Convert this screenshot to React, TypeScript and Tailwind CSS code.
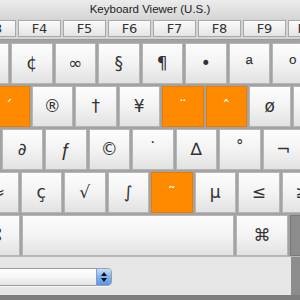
import React from "react";

type KeyProps = { label?: string; kind?: "plain" | "orange" | "dark"; w?: string; alt?: boolean };

const Key = ({ label = "", kind = "plain", w = "w-[41.5px]", alt = false }: KeyProps) => {
  const look =
    kind === "orange"
      ? "bg-[#ff8a00] border-[#e67c00] text-white text-[16px]"
      : kind === "dark"
      ? "bg-[#8c8c8c] border-[#7a7a7a] text-[#333]"
      : "bg-linear-to-b from-[#fdfdfd] via-[#f3f3f3] to-[#e2e2e2] border-[#b6b6b6] text-[#333] text-[17px]";
  return (
    <div
      className={`${w} ${look} shrink-0 h-full border flex items-center justify-center leading-none ${alt ? "text-[19px]" : ""}`}
      style={{
        fontFamily: alt
          ? '"Liberation Sans", "DejaVu Sans", sans-serif'
          : '"DejaVu Sans", "Liberation Sans", sans-serif',
      }}
    >
      {label}
    </div>
  );
};

const rows: { offset: string; keys: KeyProps[] }[] = [
  {
    offset: "ml-[-32.5px]",
    keys: [
      { label: "£" },
      { label: "¢" },
      { label: "∞" },
      { label: "§" },
      { label: "¶" },
      { label: "•" },
      { label: "ª", alt: true },
      { label: "º", alt: true },
    ],
  },
  {
    offset: "ml-[-12px]",
    keys: [
      { label: "´", kind: "orange" },
      { label: "®" },
      { label: "†" },
      { label: "¥" },
      { label: "¨", kind: "orange" },
      { label: "ˆ", kind: "orange" },
      { label: "ø" },
      { label: "π" },
    ],
  },
  {
    offset: "ml-[-42px]",
    keys: [
      { label: "å" },
      { label: "∂" },
      { label: "ƒ", alt: true },
      { label: "©" },
      { label: "˙" },
      { label: "∆" },
      { label: "˚" },
      { label: "¬" },
    ],
  },
  {
    offset: "ml-[-23px]",
    keys: [
      { label: "≈" },
      { label: "ç" },
      { label: "√" },
      { label: "∫" },
      { label: "˜", kind: "orange" },
      { label: "µ" },
      { label: "≤" },
      { label: "≥" },
    ],
  },
];

const fkeys = ["F3", "F4", "F5", "F6", "F7", "F8", "F9", "F10"];

export default function App() {
  return (
    <div
      className="w-[300px] h-[300px] overflow-hidden bg-[#d9d9d9] flex flex-col"
      style={{ fontFamily: '"Liberation Sans", "DejaVu Sans", sans-serif' }}
    >
      {/* title bar */}
      <div className="h-[19px] shrink-0 bg-linear-to-b from-[#ececec] to-[#d6d6d6] flex items-center justify-center text-[11.5px] text-[#222]">
        Keyboard Viewer (U.S.)
      </div>

      {/* function row */}
      <div className="h-[20px] shrink-0 bg-[#d4d4d4] flex gap-[2px] ml-[-27px] pt-[1px]">
        {fkeys.map((f) => (
          <div
            key={f}
            className="w-[43px] h-[17px] shrink-0 bg-linear-to-b from-[#fbfbfb] to-[#e4e4e4] border border-[#a9a9a9] flex items-center justify-center text-[13px] text-[#333]"
            style={{ fontFamily: '"DejaVu Sans", sans-serif' }}
          >
            {f}
          </div>
        ))}
      </div>

      {/* keyboard body */}
      <div className="shrink-0 bg-[#a3a3a3] pt-[3px] flex flex-col gap-[2px] border-t border-[#9a9a9a]">
        {rows.map((r, i) => (
          <div key={i} className={`h-[41px] flex gap-[2px] ${r.offset}`}>
            {r.keys.map((k, j) => (
              <Key key={j} {...k} />
            ))}
          </div>
        ))}
        <div className="h-[41px] flex gap-[2px] ml-[-31px]">
          <Key label="⌘" w="w-[51px]" />
          <Key w="w-[212px]" />
          <Key label="⌘" w="w-[52px]" />
          <Key kind="dark" w="w-[50px]" />
        </div>
      </div>

      {/* bottom panel */}
      <div className="flex-1 flex border-t border-[#b8b8b8]">
        <div className="flex-1 bg-[#e6e6e6] pt-[11px]">
          <div className="ml-[-10px] w-[122px] h-[18px] flex rounded-r-[4px] border border-[#9d9d9d] overflow-hidden shadow-[0_1px_0_#f8f8f8]">
            <div className="flex-1 bg-linear-to-b from-[#ffffff] via-[#f6f6f6] to-[#e4e4e4]" />
            <div className="w-[15px] bg-linear-to-b from-[#c9defa] via-[#7fb0ec] to-[#5a98e4] border-l border-[#7a9fd0] flex flex-col items-center justify-center gap-[2px]">
              <div className="w-0 h-0 border-l-[3px] border-r-[3px] border-b-[4px] border-l-transparent border-r-transparent border-b-[#111]" />
              <div className="w-0 h-0 border-l-[3px] border-r-[3px] border-t-[4px] border-l-transparent border-r-transparent border-t-[#111]" />
            </div>
          </div>
        </div>
        <div className="w-[9px] bg-[#8c8c8c]" />
      </div>
      <div className="h-[5px] shrink-0 bg-[#7d7d7d]" />
    </div>
  );
}
